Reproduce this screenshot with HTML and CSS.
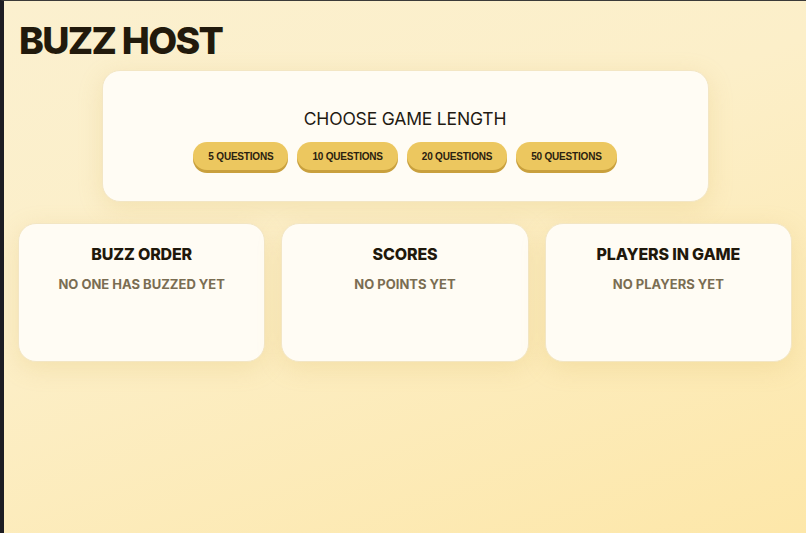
FILE: index.html
```html
<!DOCTYPE html>
<html lang="en">
<head>
    <meta charset="UTF-8">
    <meta name="viewport" content="width=device-width, initial-scale=1.0">
    <title>Buzz Host</title>
    <link rel="stylesheet" href="styles.css">
</head>
<body>
    <div class="page">
        <h1 class="title">BUZZ HOST</h1>

        <section class="panel length-panel">
            <h2 class="panel-title">CHOOSE GAME LENGTH</h2>
            <div class="length-options">
                <button class="pill">5 QUESTIONS</button>
                <button class="pill">10 QUESTIONS</button>
                <button class="pill">20 QUESTIONS</button>
                <button class="pill">50 QUESTIONS</button>
            </div>
        </section>

        <div class="cards">
            <section class="panel card">
                <h3 class="card-title">BUZZ ORDER</h3>
                <p class="card-empty">NO ONE HAS BUZZED YET</p>
            </section>
            <section class="panel card">
                <h3 class="card-title">SCORES</h3>
                <p class="card-empty">NO POINTS YET</p>
            </section>
            <section class="panel card">
                <h3 class="card-title">PLAYERS IN GAME</h3>
                <p class="card-empty">NO PLAYERS YET</p>
            </section>
        </div>
    </div>
</body>
</html>
```

FILE: styles.css
```css
html, body {
    height: 100%;
}
body {
    margin: 0;
    font-family: Inter, "Noto Sans", sans-serif;
    color: #231c10;
    background: linear-gradient(160deg, #fbf0cf 0%, #fcefc9 40%, #fde7a9 100%);
    border-left: 4px solid #1d1d23;
    border-top: 1px solid #3b3a38;
    box-sizing: border-box;
}
.page {
    padding: 16px 14px 20px 14px;
}
.title {
    margin: 0 0 5px;
    padding-left: 1px;
    font-size: 37.5px;
    line-height: 48px;
    font-weight: 800;
    letter-spacing: -0.045em;
    color: #221a0c;
}
.panel {
    background-color: #fffcf4;
    border: 1px solid #f3e6c4;
    border-radius: 18px;
    box-shadow: 0 6px 24px rgba(214, 176, 80, 0.22);
    box-sizing: border-box;
}
.length-panel {
    width: 607px;
    height: 132px;
    margin: 0 auto;
    padding: 37px 20px 0;
    text-align: center;
}
.panel-title {
    margin: 0;
    font-size: 17.5px;
    line-height: 22px;
    font-weight: 400;
    letter-spacing: -0.01em;
    color: #1f1a12;
}
.length-options {
    display: flex;
    justify-content: center;
    gap: 9px;
    margin-top: 12px;
}
.pill {
    height: 28px;
    padding: 0 15px;
    border: none;
    border-radius: 14px;
    background-color: #ecc75f;
    box-shadow: 0 3px 0 #c9a03d;
    font-family: "Liberation Sans", Arial, sans-serif;
    font-size: 10px;
    font-weight: 700;
    letter-spacing: -0.02em;
    color: #2a210f;
    cursor: pointer;
}
.pill:hover {
    background-color: #f0cf6c;
}
.cards {
    display: grid;
    grid-template-columns: repeat(3, 1fr);
    gap: 16px;
    margin-top: 21px;
}
.card {
    height: 139px;
    padding-top: 20px;
    text-align: center;
}
.card-title {
    margin: 0;
    font-size: 16px;
    line-height: 20px;
    font-weight: 800;
    letter-spacing: -0.01em;
    color: #1f180b;
}
.card-empty {
    margin: 12px 0 0;
    font-size: 13px;
    line-height: 16px;
    font-weight: 700;
    letter-spacing: 0;
    color: #7a6d52;
}
```
